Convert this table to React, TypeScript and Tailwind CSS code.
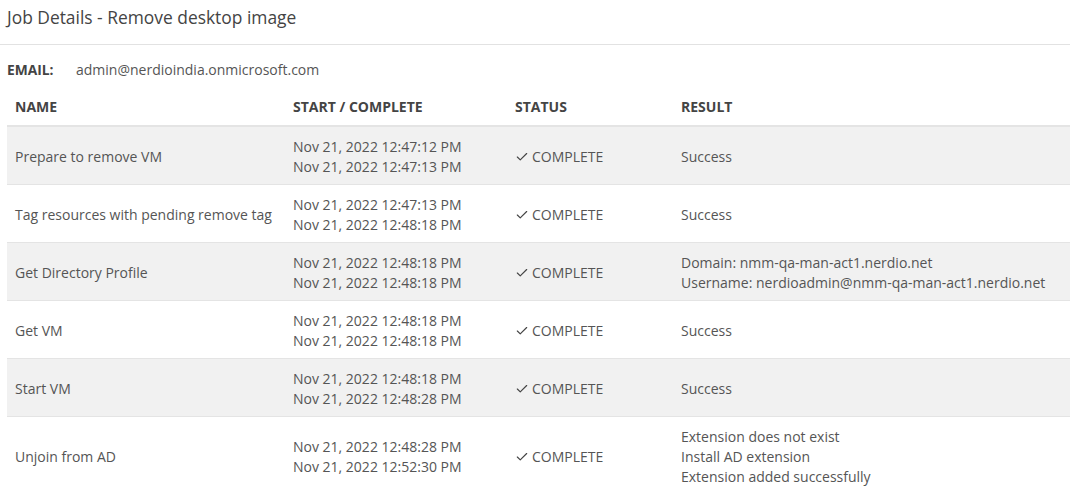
import { Check } from "lucide-react";

interface JobStep {
    name: string,
    start: string,
    end: string,
    result: string[]
}

const steps: JobStep[] = [
    { name: "Prepare to remove VM", start: "Nov 21, 2022 12:47:12 PM", end: "Nov 21, 2022 12:47:13 PM", result: ["Success"] },
    { name: "Tag resources with pending remove tag", start: "Nov 21, 2022 12:47:13 PM", end: "Nov 21, 2022 12:48:18 PM", result: ["Success"] },
    { name: "Get Directory Profile", start: "Nov 21, 2022 12:48:18 PM", end: "Nov 21, 2022 12:48:18 PM", result: ["Domain: nmm-qa-man-act1.nerdio.net", "Username: nerdioadmin@nmm-qa-man-act1.nerdio.net"] },
    { name: "Get VM", start: "Nov 21, 2022 12:48:18 PM", end: "Nov 21, 2022 12:48:18 PM", result: ["Success"] },
    { name: "Start VM", start: "Nov 21, 2022 12:48:18 PM", end: "Nov 21, 2022 12:48:28 PM", result: ["Success"] },
    { name: "Unjoin from AD", start: "Nov 21, 2022 12:48:28 PM", end: "Nov 21, 2022 12:52:30 PM", result: ["Extension does not exist", "Install AD extension", "Extension added successfully"] },
];

const cols = "grid grid-cols-[278px_222px_166px_1fr]";

const App = () => {
    return (
        <div className="w-[1071px] bg-white text-[14px] leading-5 text-[#555]" style={{ fontFamily: '"Open Sans", sans-serif' }}>
            {/* title */}
            <div className="h-[44px] pl-[7px] pt-[5px]">
                <h1 className="text-[17.4px] leading-6 text-[#444]">Job Details - Remove desktop image</h1>
            </div>
            <div className="h-px w-[1070px] bg-[#e2e2e2]" />

            <div className="pl-[7px]">
                <div className="mt-[15px] flex h-5 items-center">
                    <span className="w-[69px] text-[13.8px] font-bold text-[#444]">EMAIL:</span>
                    <span>admin@nerdioindia.onmicrosoft.com</span>
                </div>

                <div className="mt-2 w-[1063px]">
                    <div className={`${cols} h-[39px] items-center border-b-2 border-[#e4e4e4] font-bold text-[#444]`}>
                        <div className="pl-2">NAME</div>
                        <div className="pl-2">START / COMPLETE</div>
                        <div className="pl-2">STATUS</div>
                        <div className="pl-2">RESULT</div>
                    </div>

                    {steps.map((s, i) => (
                        <div key={s.name} className={`${cols} items-center border-b border-[#e4e4e4] pt-[10px] pb-[7px] ${i % 2 === 0 ? "bg-[#f1f1f1]" : "bg-white"}`}>
                            <div className="pl-2">{s.name}</div>
                            <div className="pl-2">
                                <div>{s.start}</div>
                                <div>{s.end}</div>
                            </div>
                            <div className="flex items-center gap-[3px] pl-2">
                                <Check size={14} strokeWidth={2} className="text-[#444]" />
                                <span>COMPLETE</span>
                            </div>
                            <div className="pl-2">
                                {s.result.map((r) => <div key={r}>{r}</div>)}
                            </div>
                        </div>
                    ))}
                </div>
            </div>
        </div>
    );
}

export default App;
